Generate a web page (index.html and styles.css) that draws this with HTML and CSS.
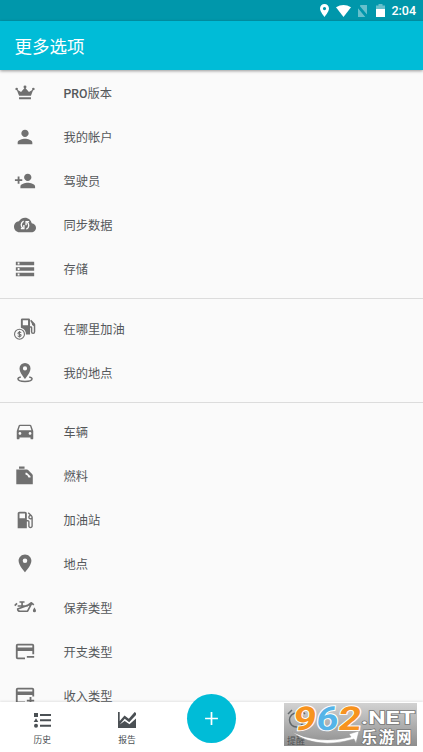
FILE: index.html
```html
<!DOCTYPE html>
<html lang="zh-CN">
<head>
<meta charset="utf-8">
<title>更多选项</title>
<link rel="stylesheet" href="styles.css">
</head>
<body>
<div class="app">
  <div class="status">
    <svg class="s-pin" viewBox="5 2 14 20"><path d="M12 2C8.1 2 5 5.1 5 9c0 5.2 7 13 7 13s7-7.800 7-13c0-3.900-3.100-7-7-7zm0 9.500a2.500 2.500 0 1 1 0-5 2.500 2.500 0 0 1 0 5z"/></svg>
    <svg class="s-wifi" viewBox="0 0 15 12"><path d="M0 2.300Q7.500-2.300 15 2.300L7.500 12z"/></svg>
    <svg class="s-sim" viewBox="0 0 11 12"><path d="M3.500 0H10v9.500L2.800 1zM1 3.200 8.300 12H1z"/><path d="M.2.500 10.500 12" class="slash"/></svg>
    <svg class="s-bat" viewBox="0 0 9 13"><path opacity=".4" d="M2.500 0h4v1.500H9V5H0V1.500h2.500z"/><path d="M0 5h9v8H0z"/></svg>
    <span>2:04</span>
  </div>
  <header class="bar">更多选项</header>
  <main class="list">
    <section class="group">
      <div class="row"><svg viewBox="0 0 24 24"><path d="M5.500 15 2.800 8l4.900 3L12 6l4.300 5 4.900-3-2.700 7zM5.500 16.700h13v2h-13z"/><circle cx="2.900" cy="7.600" r="1.400"/><circle cx="12" cy="5.500" r="1.600"/><circle cx="21.100" cy="7.600" r="1.400"/></svg><span><b>PRO</b>版本</span></div>
      <div class="row"><svg viewBox="0 0 24 24"><path d="M12 12c2.210 0 4-1.790 4-4s-1.790-4-4-4-4 1.790-4 4 1.790 4 4 4zm0 2c-2.670 0-8 1.340-8 4v2h16v-2c0-2.660-5.330-4-8-4z"/></svg><span>我的帐户</span></div>
      <div class="row"><svg viewBox="0 0 24 24"><path d="M15 12c2.210 0 4-1.790 4-4s-1.790-4-4-4-4 1.790-4 4 1.790 4 4 4zm-9-2V7H4v3H1v2h3v3h2v-3h3v-2H6zm9 4c-2.670 0-8 1.340-8 4v2h16v-2c0-2.660-5.330-4-8-4z"/></svg><span>驾驶员</span></div>
      <div class="row"><svg viewBox="0 0 24 24"><path d="M19.350 10.040C18.670 6.590 15.640 4 12 4 9.110 4 6.600 5.640 5.350 8.040 2.340 8.360 0 10.910 0 14c0 3.310 2.690 6 6 6h13c2.760 0 5-2.240 5-5 0-2.640-2.050-4.780-4.650-4.960z"/><g class="cut"><path d="M10.500 7.700a4.600 4.600 0 0 0-.5 8M13.500 16.600a4.600 4.600 0 0 0 .5-8"/><path d="M7.500 16h3.300v-4M16.500 8.300h-3.300v4"/></g></svg><span>同步数据</span></div>
      <div class="row"><svg viewBox="0 0 24 24"><path fill-rule="evenodd" d="M2 20h20v-4H2v4zm2-3h2v2H4v-2zM2 4v4h20V4H2zm4 3H4V5h2v2zm-4 7h20v-4H2v4zm2-3h2v2H4v-2z"/></svg><span>存储</span></div>
    </section>
    <section class="group">
      <div class="row"><svg viewBox="0 0 24 24"><path fill-rule="evenodd" d="M9 .5h7q1.500 0 1.500 1.500v7h1q1.500 0 1.500 1.500V15q0 1 .8 1t.8-1V9Q19 8 19.400 6L17.700 3l1-1 4 4q.5.500.5 1.500V15q0 2.500-2.400 2.500T18.400 15v-4.500h-.9V18H13q.3-6-5.500-7.500V2Q7.500.5 9 .5zm.6 2V8h5.700V2.500z"/><circle cx="6" cy="17.700" r="5.400" class="line"/><path class="line" d="M7.800 16.100Q7.300 15.200 6 15.200T4.400 16.400 6 17.700 7.700 19 6 20.200 4.200 19.200M6 14.100v7.200"/></svg><span>在哪里加油</span></div>
      <div class="row"><svg viewBox="0 0 24 24"><path fill-rule="evenodd" d="M12 1a6 6 0 0 0-6 6c0 4.500 6 11.500 6 11.500S18 11.500 18 7a6 6 0 0 0-6-6zm0 8.300a2.300 2.300 0 1 1 0-4.600 2.300 2.300 0 0 1 0 4.600z"/><path class="line thick" d="M7.400 16.300c-2 .5-3.100 1.200-3.100 2.100 0 1.600 3.400 2.900 7.700 2.900s7.700-1.300 7.700-2.900c0-.9-1.100-1.600-3.100-2.100"/></svg><span>我的地点</span></div>
    </section>
    <section class="group">
      <div class="row"><svg viewBox="0 0 24 24"><path d="M18.920 5.010C18.720 4.420 18.160 4 17.500 4h-11c-.66 0-1.210.42-1.420 1.010L3 11v8c0 .55.450 1 1 1h1c.55 0 1-.45 1-1v-1h12v1c0 .55.450 1 1 1h1c.55 0 1-.45 1-1v-8l-2.080-5.990zM6.500 15c-.83 0-1.500-.67-1.500-1.500S5.670 12 6.500 12s1.500.67 1.500 1.500S7.330 15 6.500 15zm11 0c-.83 0-1.500-.67-1.500-1.500s.67-1.500 1.500-1.500 1.500.67 1.500 1.500-.67 1.500-1.500 1.500zM5 10l1.500-4.500h11L19 10H5z"/></svg><span>车辆</span></div>
      <div class="row"><svg viewBox="0 0 24 24"><path fill-rule="evenodd" d="M5.500 1.500h6V4h-6zM2.500 5H14q1 0 1.700.7l4 4q.8.800.8 1.800V21h-18zM12.500 8.500v1.800q2.700.4 3.300 3.200h2.200v-1.300L14 8.500z"/></svg><span>燃料</span></div>
      <div class="row"><svg viewBox="0 0 24 24"><path d="m19.770 7.230.01-.01-3.720-3.720L15 4.560l2.110 2.110c-.94.360-1.610 1.260-1.610 2.330 0 1.380 1.120 2.500 2.500 2.500.36 0 .69-.08 1-.21v7.210c0 .55-.45 1-1 1s-1-.45-1-1V14c0-1.100-.9-2-2-2h-1V5c0-1.100-.9-2-2-2H6c-1.100 0-2 .9-2 2v16h10v-7.500h1.500v5c0 1.380 1.120 2.500 2.500 2.500s2.500-1.120 2.500-2.500V9c0-.69-.28-1.320-.73-1.770zM12 10H6V5h6v5zm6 0c-.55 0-1-.45-1-1s.45-1 1-1 1 .45 1 1-.45 1-1 1z"/></svg><span>加油站</span></div>
      <div class="row"><svg viewBox="0 0 24 24"><path d="M12 1.500C8.130 1.500 5 4.630 5 8.500c0 5.250 7 12.500 7 12.500s7-7.250 7-12.500c0-3.870-3.130-7-7-7zm0 9.500a2.500 2.500 0 0 1 0-5 2.500 2.500 0 0 1 0 5z"/></svg><span>地点</span></div>
      <div class="row"><svg viewBox="0 0 24 24"><path class="line oil" d="M6 5.500h5.500M8.800 6v3.500M.8 9.500 3.300 7M4 9.800h10l5-3.500 2.600 2.300M19 7.500l-4.200 8H6.500Q4 15.500 4 13z"/><path d="M22.300 11.500s-1.700 2.300-1.700 3.500a1.700 1.700 0 0 0 3.400 0c0-1.200-1.700-3.500-1.700-3.500z"/></svg><span>保养类型</span></div>
      <div class="row"><svg viewBox="0 0 24 24"><path fill-rule="evenodd" d="M4 3h16q2 0 2 2v9.500H20V11H4v7h8v2H4q-2 0-2-2V5q0-2 2-2zm0 2v2h16V5zM14 16.300h8v2h-8z"/></svg><span>开支类型</span></div>
      <div class="row"><svg viewBox="0 0 24 24"><path fill-rule="evenodd" d="M4 3h16q2 0 2 2v7.500H20V11H4v7h8v2H4q-2 0-2-2V5q0-2 2-2zm0 2v2h16V5zM17 13h2v3h3v2h-3v3h-2v-3h-3v-2h3z"/></svg><span>收入类型</span></div>
    </section>
  </main>
  <nav class="tabs">
    <div class="tab"><svg viewBox="0 0 20 20"><path d="M2 3h4v4H2zM4 8.200 6.300 12H1.700zM8 4h11v2H8zM8 9.300h11v2H8zM8 14.700h11v2H8z"/><circle cx="4" cy="15.700" r="2"/></svg><span>历史</span></div>
    <div class="tab"><svg viewBox="0 0 20 20"><path d="M1 2h1.700v9L7.500 5.500l4.300 3.300L17.700 2 19 3v2l-6.800 7.200-4.500-3.500-5 5.800 5-3.500 4.800 3.300L19 8.500V18H1z"/></svg><span>报告</span></div>
    <div class="tab"><button class="fab" aria-label="添加"><svg viewBox="0 0 14 14"><path d="M6.200 1h1.600v5.200H13v1.600H7.800V13H6.200V7.800H1V6.200h5.200z"/></svg></button></div>
    <div class="tab"></div>
    <div class="tab"></div>
  </nav>
  <div class="mark">
    <svg viewBox="0 0 133 43">
      <defs><linearGradient id="shade" x1="0" y1="0" x2="0" y2="1"><stop offset="0" stop-color="#d2d2d2"/><stop offset="1" stop-color="#8e8e8e"/></linearGradient></defs>
      <rect width="133" height="43" fill="url(#shade)"/>
      <g class="ghost"><path d="M4 11l4-4M17 7l4 4"/><circle cx="12.500" cy="17" r="7"/></g>
      <text x="3" y="41" class="ghost-text">提醒</text>
      <path class="swoosh" d="M8 29Q36 42 67 34L65 31 75 28 72 40 70 36Q32 47 8 29z"/>
      <g class="digits" transform="translate(3.500 0) skewX(-7)"><text x="8" y="27" textLength="23" lengthAdjust="spacingAndGlyphs" fill="#f7931e">9</text><text x="31" y="27" textLength="22" lengthAdjust="spacingAndGlyphs" fill="#55b4e8">6</text><text x="53" y="27" textLength="23" lengthAdjust="spacingAndGlyphs" fill="#f7931e">2</text></g>
      <text x="77" y="20.500" class="net" textLength="54" lengthAdjust="spacingAndGlyphs">.NET</text>
      <text x="77.500" y="39.500" class="cn" textLength="50">乐游网</text>
    </svg>
  </div>
</div>
</body>
</html>
```
FILE: styles.css
```css
* { box-sizing: border-box; }
body { margin: 0; font-family: Roboto, "Noto Sans CJK SC", sans-serif; }
.app { position: relative; width: 423px; height: 752px; display: flex; flex-direction: column; overflow: hidden; background: #fafafa; }
svg { display: block; flex: none; fill: currentColor; }
.status { flex: none; height: 21px; display: flex; align-items: center; justify-content: flex-end; padding-right: 7px; background: #0097ab; color: #fff; font-size: 12.5px; font-weight: 500; }
.s-pin { width: 9px; height: 13px; margin-right: 7px; }
.s-wifi { width: 15px; height: 12px; margin-right: 6px; }
.s-sim { width: 11px; height: 12px; margin-right: 8px; opacity: .4; }
.slash { stroke: #0097ab; stroke-width: 1; }
.s-bat { width: 9px; height: 13px; margin-right: 6px; }
.bar { flex: none; height: 49px; padding-left: 14.500px; display: flex; align-items: center; background: #00bcd7; color: #fff; font-size: 17.500px; box-shadow: 0 1px 3px rgba(0,0,0,.4); z-index: 1; }
.list { flex: 1; min-height: 0; overflow: hidden; padding-top: 1px; }
.group { padding-bottom: 7px; }
.group + .group { border-top: 1px solid #dcdcdc; padding-top: 7.500px; }
.row { height: 44px; display: flex; align-items: center; padding-left: 13.500px; gap: 28px; color: #55585b; font-size: 12.250px; }
.row svg { width: 22px; height: 22px; color: #707070; }
.row b { font-weight: 500; }
.cut { fill: none; stroke: #fafafa; stroke-width: 1.500; }
.line { fill: none; stroke: currentColor; stroke-width: 1.200; }
.thick { stroke-width: 1.600; }
.oil { stroke-width: 1.800; stroke-linejoin: round; }
.tabs { flex: none; height: 50px; display: flex; background: #fff; box-shadow: 0 -1px 2px rgba(0,0,0,.09); color: #4b5054; }
.tab { flex: 1; display: flex; flex-direction: column; align-items: center; padding-top: 8px; font-size: 8.750px; line-height: 13px; }
.tab > svg { width: 20px; height: 20px; margin-bottom: 4px; }
.fab { flex: none; width: 49px; height: 49px; margin-top: -16px; padding: 0; border: 0; border-radius: 50%; background: #00bcd7; color: #fff; display: flex; align-items: center; justify-content: center; }
.fab svg { width: 15px; height: 15px; }
.mark { position: absolute; left: 284px; top: 703px; width: 133px; height: 43px; }
.mark svg { width: 133px; height: 43px; overflow: visible; }
.ghost { fill: none; stroke: #62686b; stroke-width: 1.500; }
.ghost-text { font-size: 9px; fill: #4d5154; }
.swoosh { fill: #fff; stroke: #999; stroke-width: .5; }
.digits { font: 700 33px Roboto, sans-serif; stroke: #fff; stroke-width: 2px; paint-order: stroke; }
.net { font: 700 18.500px Roboto, sans-serif; fill: #fff; stroke: #777; stroke-width: 1.500px; paint-order: stroke; }
.cn { font: 700 15.500px "Noto Sans CJK SC", sans-serif; fill: #fff; stroke: #777; stroke-width: 1.500px; paint-order: stroke; }
```
